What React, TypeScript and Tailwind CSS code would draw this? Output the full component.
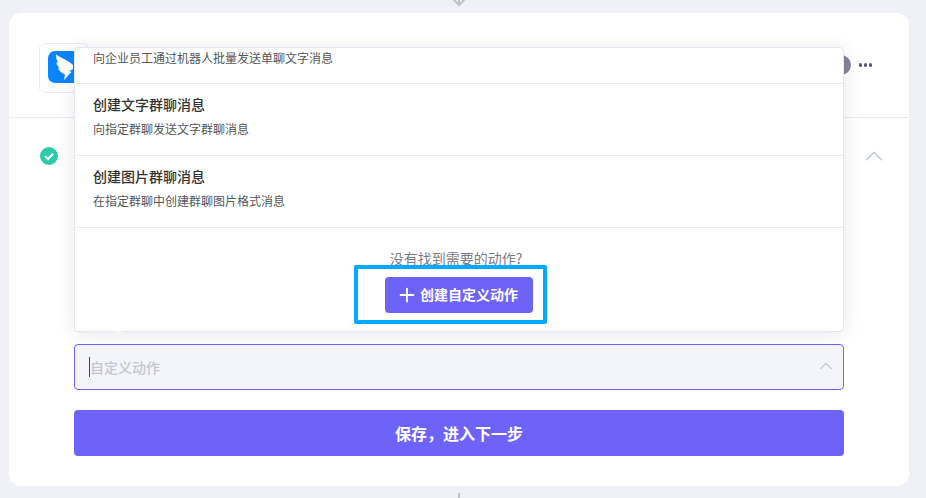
import { ChevronUp, Plus } from 'lucide-react';

const ACTIONS = [
  { title: '创建文字群聊消息', desc: '向指定群聊发送文字群聊消息' },
  { title: '创建图片群聊消息', desc: '在指定群聊中创建群聊图片格式消息' },
];

function DingIcon() {
  return (
    <div className="h-[32px] w-[32px] rounded-[7px] bg-[#0a84ff]">
      <svg viewBox="0 0 32 32" className="h-[32px] w-[32px]">
        <path
          d="M8 3.5 C13 7 20 9 25 14 L25 18 L21.5 20 L23.5 21 L16 29 L17 23.5 C13.5 22 11 19.5 10 17.5 L11.5 17 C9.5 15 8.5 13 8.5 11.5 L10 11.5 C8.5 9 8 6.5 8 3.5 Z"
          fill="#fff"
        />
      </svg>
    </div>
  );
}

export default function App() {
  return (
    <div
      className="relative h-[498px] w-[926px] overflow-hidden bg-[#f0f1f6] pl-[9px] pt-[13px]"
      style={{ fontFamily: '"Noto Sans CJK SC", "Liberation Sans", sans-serif' }}
    >
      <svg viewBox="0 0 14 7" className="absolute left-[452px] top-0 h-[7px] w-[14px]">
        <path d="M1 -1 L7 5 L13 -1 M7 -1 L7 5" fill="none" stroke="#c0c2cb" strokeWidth="2" />
      </svg>

      <div className="flex h-[473px] w-[900px] flex-col rounded-[12px] bg-white">
        {/* header */}
        <div className="flex h-[105px] shrink-0 items-center border-b border-[#e8e9ee] pl-[30px] pr-[37px]">
          <div className="mt-[6px] flex h-[50px] w-[50px] items-center rounded-[6px] border border-[#e8e9ee] pb-[2px] pl-[8px]">
            <DingIcon />
          </div>
          <div className="ml-auto flex items-center gap-[8px]">
            <div className="h-[20px] w-[20px] rounded-full bg-[#85859a]" />
            <div className="flex gap-[1.5px]">
              <span className="h-[3.5px] w-[3.5px] rounded-full bg-[#555770]" />
              <span className="h-[3.5px] w-[3.5px] rounded-full bg-[#555770]" />
              <span className="h-[3.5px] w-[3.5px] rounded-full bg-[#555770]" />
            </div>
          </div>
        </div>

        {/* step */}
        <div className="flex items-center justify-between pl-[31px] pr-[20px] pt-[23px]">
          <svg viewBox="0 0 18 18" className="h-[18px] w-[18px]">
            <circle cx="9" cy="9" r="9" fill="#2dcaa8" />
            <path d="M5 9.2 L8 12 L13 6.8" fill="none" stroke="#fff" strokeWidth="2" />
          </svg>
          <ChevronUp className="h-[30px] w-[30px] text-[#b8c0d0]" strokeWidth={1} />
        </div>

        <div className="mt-auto flex flex-col px-[65px] pb-[30px]">
          <div className="flex h-[46px] items-center justify-between rounded-[4px] border border-[#6e63f8] bg-[#f4f5fa] pl-[15px] pr-[6px]">
            <span className="-ml-[1px] border-l border-[#444] text-[14px] font-medium leading-[20px] text-[#c3c6d0]">自定义动作</span>
            <ChevronUp className="-mt-[2px] h-[22px] w-[22px] text-[#c4cbd8]" strokeWidth={1.2} />
          </div>
          <button className="mt-[20px] h-[46px] rounded-[4px] bg-[#6e63f8] text-[16px] font-bold text-white">
            保存，进入下一步
          </button>
        </div>
      </div>

      {/* dropdown */}
      <div className="absolute left-[74px] top-[47px] flex h-[285px] w-[770px] flex-col rounded-[4px] border border-[#e4e5ee] bg-white shadow-[0_2px_18px_rgba(30,30,60,0.1)]">
        <div className="h-[36px] shrink-0 border-b border-[#e8e9ee] pl-[18px] text-[12px] leading-[20px] text-[#555]">
          向企业员工通过机器人批量发送单聊文字消息
        </div>
        {ACTIONS.map((item) => (
          <div key={item.title} className="h-[72px] shrink-0 border-b border-[#e8e9ee] pl-[18px] pt-[9px]">
            <div className="text-[14px] font-medium leading-[22px] text-[#333]">{item.title}</div>
            <div className="mt-[4px] text-[12px] leading-[20px] text-[#555]">{item.desc}</div>
          </div>
        ))}
        <div className="flex flex-1 flex-col items-center pr-[6px] pt-[20px]">
          <div className="text-[14px] leading-[20px] text-[#777b85]">没有找到需要的动作?</div>
          <div className="-mt-[3px] mr-[11px] flex h-[59px] w-[193px] items-center justify-end rounded-[2px] border-[4px] border-[#00aaff] pr-[10px]">
            <button className="flex h-[36px] w-[148px] items-center justify-center gap-[2px] rounded-[4px] bg-[#6e63f8] pr-[4px] text-[14px] font-semibold text-white">
              <Plus className="h-[22px] w-[22px]" strokeWidth={2} />
              创建自定义动作
            </button>
          </div>
        </div>
        <div className="absolute -bottom-[5px] left-[39px] h-0 w-0 border-x-[5px] border-t-[5px] border-x-transparent border-t-[#f6f6f9]" />
      </div>

      <div className="absolute bottom-0 left-[458px] h-[5px] w-[2px] bg-[#c0c2cb]" />
    </div>
  );
}
